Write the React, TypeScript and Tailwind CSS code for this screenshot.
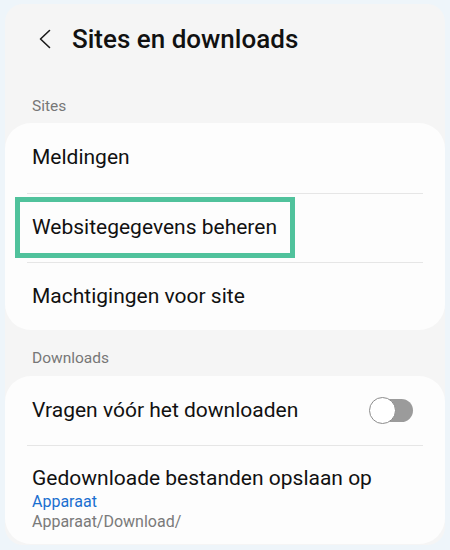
import { useState } from 'react';

const font = { fontFamily: 'Roboto, "Noto Sans", sans-serif' };

const Divider = () => <div className="mx-[22px] h-px bg-[#e6e6e6]" />;

const Toggle = ({ on, onChange }: { on: boolean; onChange: () => void }) => (
  <button onClick={onChange} className="relative flex h-[27px] w-[46px] items-center">
    <span className={`ml-[10px] h-[23px] w-[34px] rounded-full ${on ? 'bg-[#3e91ff]' : 'bg-[#9b9b9b]'}`} />
    <span
      className={`absolute top-0 h-[27px] w-[27px] rounded-full border-[1.5px] border-[#8c8c8c] bg-white ${on ? 'left-[19px]' : 'left-0'}`}
    />
  </button>
);

export default function App() {
  const [ask, setAsk] = useState(false);

  return (
    <div className="h-[550px] w-[450px] bg-[#eef5fa] px-[5px] pt-[4px]" style={font}>
      <div className="h-[541px] overflow-hidden rounded-[18px] bg-[#f5f5f5]">
        {/* Header */}
        <div className="flex h-[70px] items-center">
          <svg className="ml-[32px] h-[20px] w-[16px]" viewBox="0 0 16 20" fill="none">
            <path d="M12.5 1.5 L3.5 10 L12.5 18.5" stroke="#1a1a1a" strokeWidth="1.6" strokeLinecap="round" strokeLinejoin="round" />
          </svg>
          <h1 className="ml-[19px] text-[26px] font-medium text-[#111]">Sites en downloads</h1>
        </div>

        <div className="pl-[27px] pt-[22px] pb-[7px] text-[15.5px] leading-[20px] text-[#777]">Sites</div>

        <div className="rounded-[26px] bg-[#fdfdfd]">
          <div className="flex h-[70px] items-center pl-[27px] text-[21px] text-[#111]">Meldingen</div>
          <Divider />
          <div className="relative flex h-[68px] items-center pl-[27px] text-[21px] text-[#111]">
            Websitegegevens beheren
            <div className="pointer-events-none absolute left-[10px] top-[3px] h-[61px] w-[280px] border-[5px] border-[#50c29c]" />
          </div>
          <Divider />
          <div className="flex h-[67px] items-center pl-[27px] text-[21px] text-[#111]">Machtigingen voor site</div>
        </div>

        <div className="pl-[27px] pt-[18px] pb-[8px] text-[15.5px] leading-[20px] text-[#777]">Downloads</div>

        <div className="rounded-[26px] bg-[#fdfdfd]">
          <div className="flex h-[69px] items-center justify-between pl-[27px] pr-[30px] text-[21px] text-[#111]">
            <span>Vragen vóór het downloaden</span>
            <Toggle on={ask} onChange={() => setAsk(!ask)} />
          </div>
          <Divider />
          <div className="pl-[27px] pt-[19px] pb-[12px]">
            <div className="text-[21px] leading-[27px] text-[#111]">Gedownloade bestanden opslaan op</div>
            <div className="text-[16px] leading-[20px] text-[#1a6fd0]">Apparaat</div>
            <div className="text-[16px] leading-[20px] text-[#7a7a7a]">Apparaat/Download/</div>
          </div>
        </div>
      </div>
    </div>
  );
}
